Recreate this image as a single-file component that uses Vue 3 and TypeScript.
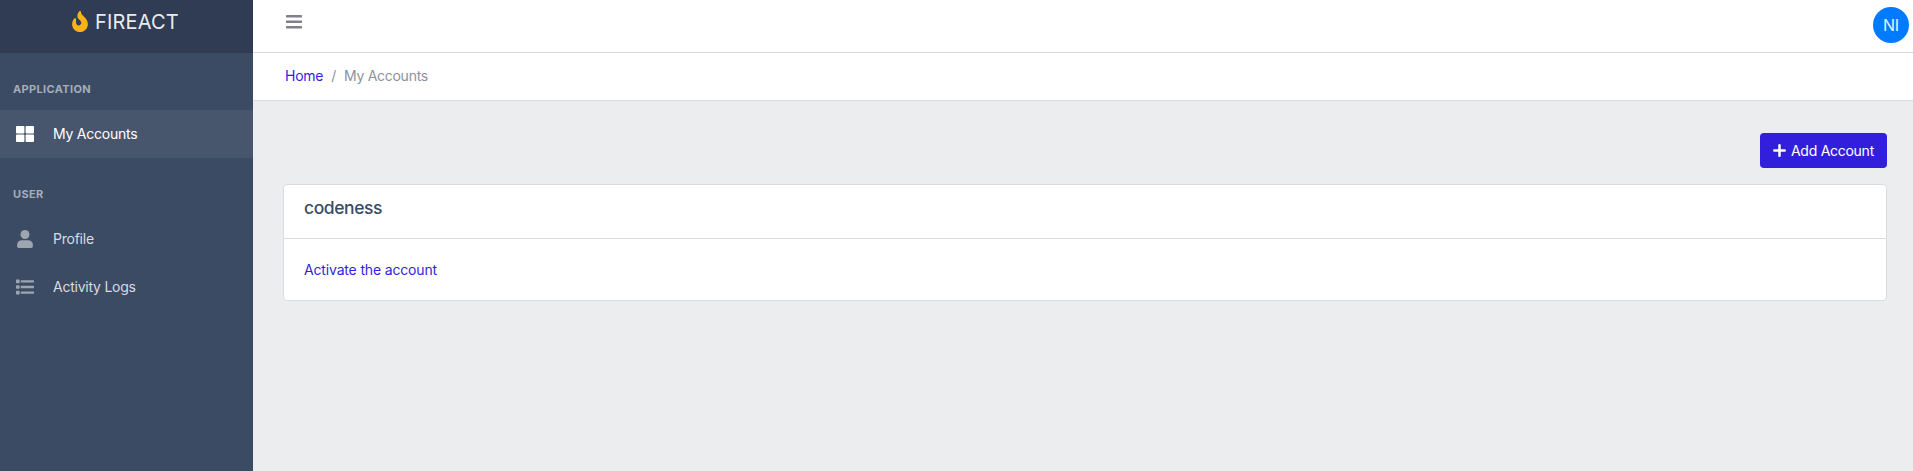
<script setup lang="ts">
interface NavItem {
  label: string
  icon: 'grid' | 'user' | 'list'
  active?: boolean
}

interface NavSection {
  title: string
  items: NavItem[]
}

const sections: NavSection[] = [
  { title: 'Application', items: [{ label: 'My Accounts', icon: 'grid', active: true }] },
  {
    title: 'User',
    items: [
      { label: 'Profile', icon: 'user' },
      { label: 'Activity Logs', icon: 'list' },
    ],
  },
]

const accounts: string[] = ['codeness']
</script>

<template>
  <div class="app">
    <aside class="sidebar">
      <div class="brand">
        <svg class="flame" viewBox="0 0 384 512" aria-hidden="true">
          <path d="M216 23.86c0-23.8-30.65-32.77-44.15-13.04C48 191.85 224 200 224 288c0 35.63-29.11 64.46-64.85 63.99-35.17-.45-63.15-29.77-63.15-64.94v-85.51c0-21.7-26.47-32.23-41.43-16.5C27.8 213.16 0 261.33 0 320c0 105.87 86.13 192 192 192s192-86.13 192-192c0-170.29-168-193-168-296.14z" />
        </svg>
        <span>FIREACT</span>
      </div>
      <nav>
        <section v-for="section in sections" :key="section.title">
          <h2 class="nav-title">{{ section.title }}</h2>
          <a v-for="item in section.items" :key="item.label" class="nav-item" :class="{ active: item.active }">
            <svg v-if="item.icon === 'grid'" class="nav-icon" viewBox="0 0 18 18" aria-hidden="true">
              <rect x="0" y="1" width="8.4" height="7.4" rx=".9" />
              <rect x="9.6" y="1" width="8.4" height="7.4" rx=".9" />
              <rect x="0" y="9.6" width="8.4" height="7.4" rx=".9" />
              <rect x="9.6" y="9.6" width="8.4" height="7.4" rx=".9" />
            </svg>
            <svg v-else-if="item.icon === 'user'" class="nav-icon" viewBox="0 0 18 18" aria-hidden="true">
              <circle cx="9" cy="4.5" r="4.5" />
              <path d="M5.8 10.2h6.4a4.7 4.7 0 0 1 4.7 4.7v1.4a1.7 1.7 0 0 1-1.7 1.7H2.8a1.7 1.7 0 0 1-1.7-1.7v-1.4a4.7 4.7 0 0 1 4.7-4.7z" />
            </svg>
            <svg v-else class="nav-icon" viewBox="0 0 18 18" aria-hidden="true">
              <g v-for="y in [1.6, 7.2, 12.8]" :key="y">
                <rect x="0" :y="y" width="3.6" height="3.6" rx=".7" />
                <rect x="4.7" :y="y + 0.6" width="13.3" height="2.4" rx=".5" />
              </g>
            </svg>
            <span>{{ item.label }}</span>
          </a>
        </section>
      </nav>
    </aside>

    <div class="content">
      <header class="topbar">
        <svg class="burger" viewBox="0 0 16 16" aria-hidden="true">
          <rect y="1" width="16" height="2.6" rx=".6" />
          <rect y="6.5" width="16" height="2.6" rx=".6" />
          <rect y="12" width="16" height="2.6" rx=".6" />
        </svg>
        <div class="avatar">NI</div>
      </header>
      <div class="breadcrumb">
        <a class="link">Home</a>
        <span class="slash">/</span>
        <span>My Accounts</span>
      </div>
      <main>
        <button class="add" type="button">
          <svg viewBox="0 0 13 13" aria-hidden="true">
            <path d="M6.5 1.3v10.4M1.3 6.5h10.4" />
          </svg>
          <span>Add Account</span>
        </button>
        <article v-for="account in accounts" :key="account" class="card">
          <h1>{{ account }}</h1>
          <div class="card-body"><a class="link">Activate the account</a></div>
        </article>
      </main>
    </div>
  </div>
</template>

<style>
body {
  margin: 0;
}
</style>

<style scoped>
.app {
  display: flex;
  height: 100vh;
  overflow: hidden;
  background: #ebedef;
  color: #3c4b64;
  font: 400 14px/21px Inter, "Liberation Sans", sans-serif;
  letter-spacing: -0.16px;
}
.sidebar {
  flex: 0 0 253px;
  background: #3c4b64;
}
.brand {
  display: flex;
  box-sizing: border-box;
  height: 53px;
  padding: 10px 0 0 71.5px;
  background: #303c54;
  color: #eaebed;
  font-size: 20px;
  line-height: 24px;
  letter-spacing: 0.15px;
}
.flame {
  width: 16px;
  height: 21px;
  margin: 0.6px 7.5px 0 0;
  fill: #fcb116;
}
.nav-title {
  height: 57px;
  margin: 0;
  box-sizing: border-box;
  padding: 28px 13px 0;
  color: #a5adb9;
  font-size: 11px;
  font-weight: 700;
  line-height: 17px;
  letter-spacing: 0.35px;
  text-transform: uppercase;
}
.nav-item {
  display: flex;
  align-items: center;
  height: 48px;
  padding-left: 16px;
  color: #d8dbe0;
}
.nav-item span {
  padding-bottom: 1px;
  letter-spacing: -0.24px;
}
.nav-icon {
  width: 18px;
  height: 18px;
  margin-right: 19px;
  fill: #9da5b1;
}
.active {
  background: #48566d;
  color: #fff;
}
.active .nav-icon {
  fill: #fff;
}
.content {
  flex: 1;
  min-width: 0;
}
.topbar {
  display: flex;
  justify-content: space-between;
  box-sizing: border-box;
  height: 53px;
  padding: 7px 4px 0 33px;
  border-bottom: 1px solid #d8dbe0;
  background: #fff;
}
.burger {
  width: 16px;
  height: 16px;
  margin-top: 6.5px;
  fill: #80808a;
}
.avatar {
  width: 36px;
  height: 36px;
  border-radius: 50%;
  background: #007bff;
  color: #e5f1ff;
  font-size: 16px;
  line-height: 37px;
  text-align: center;
}
.breadcrumb {
  display: flex;
  align-items: center;
  gap: 8px;
  box-sizing: border-box;
  height: 48px;
  padding: 0 0 2px 32px;
  border-bottom: 1px solid #d8dbe0;
  background: #fff;
  color: #8a93a2;
  letter-spacing: -0.27px;
}
.link {
  color: #321fdb;
}
main {
  display: flex;
  flex-direction: column;
  padding: 32px 26px 0 30px;
}
.add {
  display: flex;
  align-items: center;
  align-self: flex-end;
  box-sizing: border-box;
  width: 127px;
  height: 35px;
  margin: 0 0 16px;
  padding: 0 0 0 13.3px;
  border: 0;
  border-radius: 4px;
  background: #321fdb;
  color: #fff;
  font: inherit;
  letter-spacing: -0.27px;
  white-space: nowrap;
}
.add svg {
  width: 13px;
  height: 13px;
  margin-right: 4.7px;
  fill: none;
  stroke: #fff;
  stroke-linecap: round;
  stroke-width: 2.5;
}
.card {
  border: 1px solid #d8dbe0;
  border-radius: 4px;
  background: #fff;
}
h1 {
  box-sizing: border-box;
  height: 54px;
  margin: 0;
  padding: 12px 20px 0;
  border-bottom: 1px solid #d8dbe0;
  font-size: 17.5px;
  font-weight: 500;
  line-height: 21px;
  letter-spacing: -0.42px;
}
.card-body {
  padding: 20px;
}
</style>
